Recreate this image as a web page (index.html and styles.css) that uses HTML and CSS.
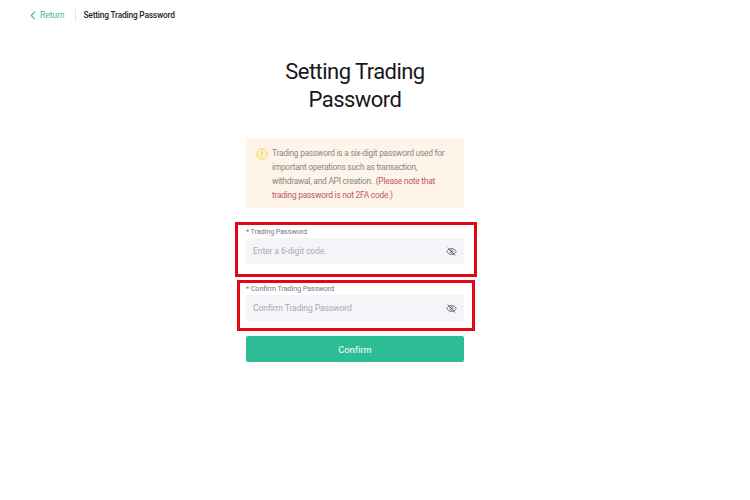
FILE: index.html
```html
<!DOCTYPE html>
<html lang="en">

<head>
    <meta charset="UTF-8">
    <meta name="viewport" content="width=device-width, initial-scale=1.0">
    <title>Setting Trading Password</title>
    <link rel="stylesheet" href="styles.css">
</head>

<body>
    <div class="topbar">
        <a class="back" href="#">
            <svg class="back-icon" width="6" height="9" viewBox="0 0 6 9"><path d="M4.8 .8 1.2 4.5l3.6 3.7" fill="none" stroke="#2fb98f" stroke-width="1.1"/></svg>
            Return
        </a>
        <span class="topbar-title">Setting Trading Password</span>
    </div>

    <div class="panel">
        <h1 class="title">Setting Trading<br>Password</h1>

        <div class="notice">
            <svg class="notice-icon" width="12" height="12" viewBox="0 0 12 12">
                <circle cx="6" cy="6" r="5.2" fill="#fdf3c8" stroke="#f3cf6e" stroke-width="1"/>
                <path d="M6 3v3.6M6 8v1" stroke="#edbd45" stroke-width="1.1" fill="none"/>
            </svg>
            <p class="notice-text">Trading password is a six-digit password used for important operations such as transaction, withdrawal, and API creation. <span class="notice-warn">(Please note that trading password is not 2FA code.)</span></p>
        </div>

        <div class="field field-first">
            <span class="mark mark-first"></span>
            <label class="field-label">* Trading Password</label>
            <div class="input-box">
                <span class="placeholder">Enter a 6-digit code.</span>
                <svg class="eye" width="11" height="11" viewBox="0 0 12 12"><path d="M.8 6C2.2 3.8 4 2.7 6 2.7S9.8 3.8 11.2 6C9.8 8.2 8 9.3 6 9.3S2.2 8.2.8 6Z" fill="none" stroke="#666" stroke-width="1"/><circle cx="6" cy="6" r="1.7" fill="none" stroke="#666" stroke-width="1"/><path d="M2 1.6 10 10.4" stroke="#666" stroke-width="1"/></svg>
            </div>
        </div>

        <div class="field field-second">
            <span class="mark mark-second"></span>
            <label class="field-label">* Confirm Trading Password</label>
            <div class="input-box">
                <span class="placeholder">Confirm Trading Password</span>
                <svg class="eye" width="11" height="11" viewBox="0 0 12 12"><path d="M.8 6C2.2 3.8 4 2.7 6 2.7S9.8 3.8 11.2 6C9.8 8.2 8 9.3 6 9.3S2.2 8.2.8 6Z" fill="none" stroke="#666" stroke-width="1"/><circle cx="6" cy="6" r="1.7" fill="none" stroke="#666" stroke-width="1"/><path d="M2 1.6 10 10.4" stroke="#666" stroke-width="1"/></svg>
            </div>
        </div>

        <button class="confirm">Confirm</button>
    </div>
</body>

</html>
```

FILE: styles.css
```css
body {
    margin: 0;
    padding: 0;
    background: #fff;
    font-family: Roboto, "Liberation Sans", sans-serif;
    color: #1d1f24;
}

.topbar {
    display: flex;
    align-items: center;
    height: 12px;
    padding: 9px 0 0 30px;
}

.back {
    display: flex;
    align-items: center;
    gap: 4px;
    padding-right: 11px;
    border-right: 1px solid #e6e6e6;
    font-size: 8.6px;
    line-height: 12px;
    letter-spacing: -0.1px;
    color: #3fb994;
    text-decoration: none;
}

.topbar-title {
    margin-left: 7px;
    font-size: 8.4px;
    letter-spacing: -0.2px;
    font-weight: 500;
    color: #23252a;
}

.panel {
    width: 218px;
    margin-left: 246px;
}

.title {
    margin: 37px 0 0;
    font-size: 22px;
    line-height: 28px;
    font-weight: 400;
    letter-spacing: -0.55px;
    text-align: center;
    color: #17181c;
}

.notice {
    display: flex;
    gap: 4px;
    margin-top: 24px;
    padding: 8px 14px 6px 10px;
    background: #fef4ea;
}

.notice-icon {
    flex: none;
    margin-top: 2px;
}

.notice-text {
    margin: 0;
    font-size: 8.4px;
    line-height: 14px;
    letter-spacing: -0.24px;
    color: #8a8782;
}

.notice-warn {
    margin-left: 1px;
    color: #bd5a5e;
}

.field {
    position: relative;
}

.field-first {
    margin-top: 18px;
}

.field-second {
    margin-top: 19px;
}

.field-label {
    display: block;
    font-size: 7.3px;
    line-height: 11px;
    letter-spacing: -0.12px;
    color: #77797e;
}

.input-box {
    display: flex;
    align-items: center;
    justify-content: space-between;
    height: 26px;
    margin-top: 1px;
    padding: 0 7px;
    background: #f4f5f8;
    border-radius: 2px;
}

.placeholder {
    font-size: 8.6px;
    letter-spacing: -0.12px;
    color: #a9abb1;
}

.mark {
    position: absolute;
    border: 3px solid #e30613;
    box-sizing: border-box;
    pointer-events: none;
}

.mark-first {
    top: -4px;
    left: -11px;
    width: 242px;
    height: 55px;
}

.mark-second {
    top: -3px;
    left: -9px;
    width: 238px;
    height: 51px;
}

.confirm {
    display: block;
    width: 100%;
    height: 26px;
    margin-top: 15px;
    padding: 0;
    border: 0;
    border-radius: 2px;
    background: #2dbd94;
    font-family: inherit;
    font-size: 9.4px;
    letter-spacing: -0.05px;
    font-weight: 500;
    color: #d8f5ea;
}
```
